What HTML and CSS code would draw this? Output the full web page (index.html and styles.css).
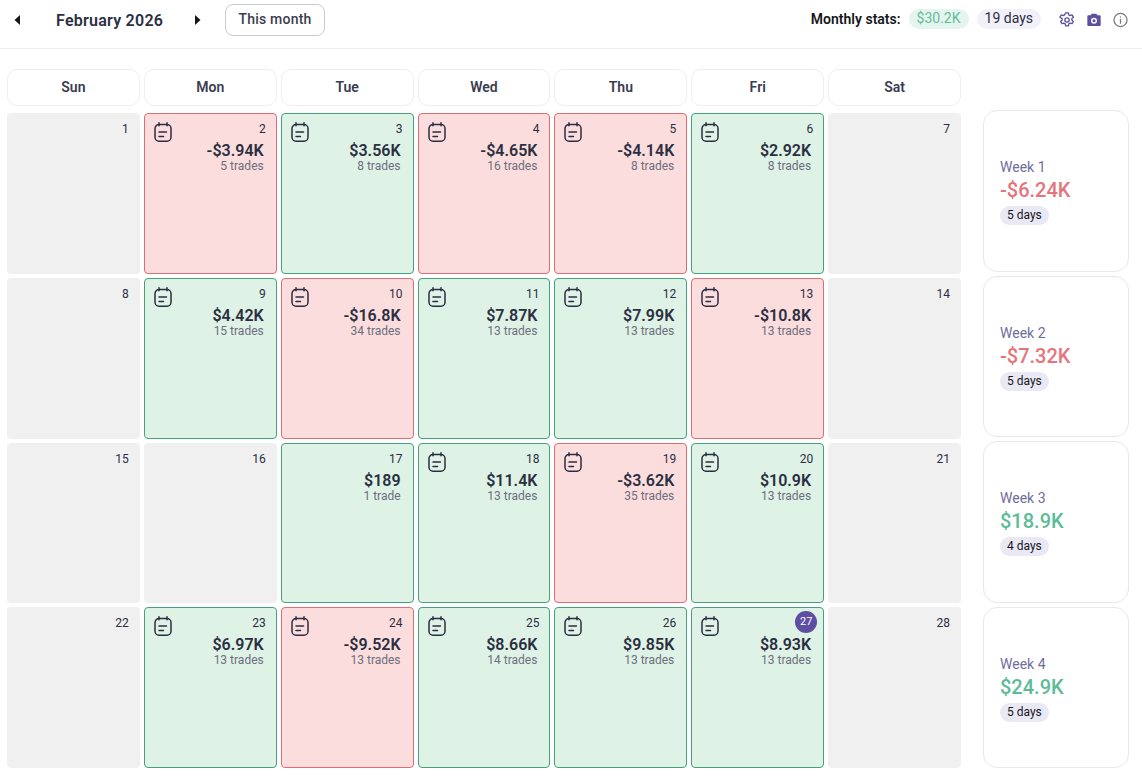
FILE: index.html
```html
<!DOCTYPE html>
<html lang="en">
<head>
<meta charset="utf-8">
<title>February 2026</title>
<link rel="stylesheet" href="styles.css">
</head>
<body>
<svg class="defs" width="0" height="0" aria-hidden="true">
  <defs>
    <symbol id="note" viewBox="0 0 18 20">
      <path d="M5 .8v3M13 .8v3M5 2.500h8A4 4 0 0 1 17 6.500v8.700a4 4 0 0 1-4 4H5a4 4 0 0 1-4-4V6.500A4 4 0 0 1 5 2.500ZM5 10h7.500M5 14.500h4.500" fill="none" stroke="currentColor" stroke-width="1.500" stroke-linecap="round"/>
    </symbol>
  </defs>
</svg>
<header class="topbar">
  <div class="nav">
    <button class="arrow"><svg width="7" height="10" viewBox="0 0 7 10"><path d="M6 0v10L0.500 5Z"/></svg></button>
    <h1 class="month">February 2026</h1>
    <button class="arrow"><svg width="7" height="10" viewBox="0 0 7 10"><path d="M1 0v10L6.500 5Z"/></svg></button>
    <button class="today">This month</button>
  </div>
  <div class="stats">
    <span class="stats-label">Monthly stats:</span>
    <span class="pill pill-green">$30.2K</span>
    <span class="pill pill-lilac">19 days</span>
    <div class="tools">
      <svg width="16" height="16" viewBox="0 0 24 24" fill="none" stroke="#5e4fa2" stroke-width="2" stroke-linejoin="round"><path d="M10 1.200h4l.7 3.100 1.900 1.100 3-1 2 3.400-2.300 2.100v2.200l2.300 2.100-2 3.400-3-1-1.900 1.100-.7 3.100h-4l-.7-3.100-1.900-1.100-3 1-2-3.400 2.300-2.100v-2.200L1.400 7.800l2-3.400 3 1 1.900-1.100Z"/><circle cx="12" cy="12" r="3.200"/></svg>
      <svg width="16" height="16" viewBox="0 0 24 24"><path fill="#5e4fa2" fill-rule="evenodd" d="M8.500 2.500h7L17 5h3.500A1.500 1.500 0 0 1 22 6.500v13a1.500 1.500 0 0 1-1.500 1.500h-17A1.500 1.500 0 0 1 2 19.500v-13A1.500 1.500 0 0 1 3.500 5H7ZM12 8.500a4.500 4.500 0 1 0 0 9 4.500 4.500 0 0 0 0-9Zm0 2.200a2.300 2.300 0 1 1 0 4.600 2.300 2.300 0 0 1 0-4.600Z"/></svg>
      <svg width="15" height="16" viewBox="0 0 24 24" fill="none" stroke="#77777f" stroke-width="2" stroke-linecap="round"><circle cx="12" cy="12" r="10.500"/><path d="M12 11v6M12 7v.2"/></svg>
    </div>
  </div>
</header>
<main class="board">
  <section class="calendar">
    <div class="dow">Sun</div><div class="dow">Mon</div><div class="dow">Tue</div><div class="dow">Wed</div><div class="dow">Thu</div><div class="dow">Fri</div><div class="dow">Sat</div>

    <div class="day empty"><span class="num">1</span></div>
    <div class="day loss"><svg class="note"><use href="#note"/></svg><span class="num">2</span><b class="pnl">-$3.94K</b><span class="trades">5 trades</span></div>
    <div class="day win"><svg class="note"><use href="#note"/></svg><span class="num">3</span><b class="pnl">$3.56K</b><span class="trades">8 trades</span></div>
    <div class="day loss"><svg class="note"><use href="#note"/></svg><span class="num">4</span><b class="pnl">-$4.65K</b><span class="trades">16 trades</span></div>
    <div class="day loss"><svg class="note"><use href="#note"/></svg><span class="num">5</span><b class="pnl">-$4.14K</b><span class="trades">8 trades</span></div>
    <div class="day win"><svg class="note"><use href="#note"/></svg><span class="num">6</span><b class="pnl">$2.92K</b><span class="trades">8 trades</span></div>
    <div class="day empty"><span class="num">7</span></div>

    <div class="day empty"><span class="num">8</span></div>
    <div class="day win"><svg class="note"><use href="#note"/></svg><span class="num">9</span><b class="pnl">$4.42K</b><span class="trades">15 trades</span></div>
    <div class="day loss"><svg class="note"><use href="#note"/></svg><span class="num">10</span><b class="pnl">-$16.8K</b><span class="trades">34 trades</span></div>
    <div class="day win"><svg class="note"><use href="#note"/></svg><span class="num">11</span><b class="pnl">$7.87K</b><span class="trades">13 trades</span></div>
    <div class="day win"><svg class="note"><use href="#note"/></svg><span class="num">12</span><b class="pnl">$7.99K</b><span class="trades">13 trades</span></div>
    <div class="day loss"><svg class="note"><use href="#note"/></svg><span class="num">13</span><b class="pnl">-$10.8K</b><span class="trades">13 trades</span></div>
    <div class="day empty"><span class="num">14</span></div>

    <div class="day empty"><span class="num">15</span></div>
    <div class="day empty"><span class="num">16</span></div>
    <div class="day win"><span class="num">17</span><b class="pnl">$189</b><span class="trades">1 trade</span></div>
    <div class="day win"><svg class="note"><use href="#note"/></svg><span class="num">18</span><b class="pnl">$11.4K</b><span class="trades">13 trades</span></div>
    <div class="day loss"><svg class="note"><use href="#note"/></svg><span class="num">19</span><b class="pnl">-$3.62K</b><span class="trades">35 trades</span></div>
    <div class="day win"><svg class="note"><use href="#note"/></svg><span class="num">20</span><b class="pnl">$10.9K</b><span class="trades">13 trades</span></div>
    <div class="day empty"><span class="num">21</span></div>

    <div class="day empty"><span class="num">22</span></div>
    <div class="day win"><svg class="note"><use href="#note"/></svg><span class="num">23</span><b class="pnl">$6.97K</b><span class="trades">13 trades</span></div>
    <div class="day loss"><svg class="note"><use href="#note"/></svg><span class="num">24</span><b class="pnl">-$9.52K</b><span class="trades">13 trades</span></div>
    <div class="day win"><svg class="note"><use href="#note"/></svg><span class="num">25</span><b class="pnl">$8.66K</b><span class="trades">14 trades</span></div>
    <div class="day win"><svg class="note"><use href="#note"/></svg><span class="num">26</span><b class="pnl">$9.85K</b><span class="trades">13 trades</span></div>
    <div class="day win"><svg class="note"><use href="#note"/></svg><span class="num today-num">27</span><b class="pnl">$8.93K</b><span class="trades">13 trades</span></div>
    <div class="day empty"><span class="num">28</span></div>
  </section>
  <aside class="weeks">
    <div class="week"><span class="week-name">Week 1</span><b class="week-pnl neg">-$6.24K</b><span class="week-days">5 days</span></div>
    <div class="week"><span class="week-name">Week 2</span><b class="week-pnl neg">-$7.32K</b><span class="week-days">5 days</span></div>
    <div class="week"><span class="week-name">Week 3</span><b class="week-pnl pos">$18.9K</b><span class="week-days">4 days</span></div>
    <div class="week"><span class="week-name">Week 4</span><b class="week-pnl pos">$24.9K</b><span class="week-days">5 days</span></div>
  </aside>
</main>
</body>
</html>
```
FILE: styles.css
```css
* { box-sizing: border-box; }
html, body { margin: 0; height: 100%; }
body {
  background: #fff;
  font-family: Roboto, "Liberation Sans", sans-serif;
  color: #2b2d42;
  overflow: hidden;
}
.defs { position: absolute; }
.topbar {
  height: 49px;
  border-bottom: 1px solid #eeeeee;
  display: flex;
  align-items: center;
  justify-content: space-between;
  padding: 0 14px 8px 14px;
}
.nav { display: flex; align-items: center; }
.arrow {
  border: 0;
  background: none;
  padding: 0;
  width: 7px;
  height: 10px;
  display: flex;
  margin-top: 0;
}
.arrow svg { fill: #16161d; }
.month {
  margin: 1px 0 0 35px;
  width: 138px;
  font-size: 16px;
  font-weight: 600;
  letter-spacing: .25px;
  color: #2b2f42;
  line-height: 20px;
}
.today {
  margin: 0 0 0 24px;
  width: 100px;
  height: 32px;
  border: 1px solid #c9c9d2;
  border-radius: 8px;
  background: #fff;
  font: 500 14px Roboto, sans-serif;
  letter-spacing: .2px;
  color: #3b3d50;
  padding: 0 0 3px;
}
.stats { display: flex; align-items: center; margin-top: -3px; }
.stats-label { font-size: 14px; font-weight: 600; color: #16161d; margin-left: 1px; }
.pill {
  font-size: 14px;
  height: 20px;
  line-height: 19px;
  border-radius: 10px;
  padding: 0 8px;
}
.pill-green { margin-left: 8px; background: #e3f5ee; color: #63bd9a; }
.pill-lilac { margin-left: 8px; background: #f2f1fa; color: #2b2d42; }
.tools { display: flex; gap: 11px; margin-left: 18px; margin-top: 3px; }
.tools svg { display: block; }
.board {
  display: flex;
  align-items: flex-end;
  padding: 20px 0 0 7px;
}
.calendar {
  width: 954px;
  display: grid;
  grid-template-columns: repeat(7, 1fr);
  grid-template-rows: 40px repeat(4, 160.75px);
  gap: 4px;
}
.dow {
  border: 1.500px solid #eeeeee;
  border-radius: 10px;
  display: flex;
  align-items: center;
  justify-content: center;
  font-size: 14px;
  font-weight: 600;
  color: #3a3c50;
  margin-bottom: 3px;
  padding-bottom: 1px;
}
.day {
  position: relative;
  border-radius: 4px;
  display: flex;
  flex-direction: column;
  align-items: flex-end;
  padding: 8px 12px 0 0;
  border: 1px solid transparent;
}
.empty { background: #f0f0f0; }
.win { background: #dff2e6; border-color: #45a17c; }
.loss { background: #fcdddd; border-color: #de6d74; }
.note {
  position: absolute;
  left: 9px;
  top: 8px;
  width: 18px;
  height: 20px;
  color: #2b2d42;
}
.num { font-size: 12px; line-height: 14px; color: #2b2d42; margin-right: -2px; }
.today-num {
  width: 22px;
  height: 22px;
  margin: -5px -6px -3px 0;
  border-radius: 50%;
  background: #5e4fa2;
  color: #fff;
  font-size: 11px;
  line-height: 22px;
  text-align: center;
}
.pnl { font-size: 16px; font-weight: 600; line-height: 19px; margin-top: 5px; color: #2b2f42; }
.trades { font-size: 12px; line-height: 13px; color: #6c6e7e; margin-top: 0; }
.weeks {
  width: 146px;
  margin-left: 22px;
  display: flex;
  flex-direction: column;
  gap: 4px;
}
.week {
  height: 161.500px;
  border: 1px solid #e8e8e8;
  border-radius: 14px;
  display: flex;
  flex-direction: column;
  align-items: flex-start;
  justify-content: center;
  padding: 2px 0 0 16px;
}
.week-name { font-size: 14px; line-height: 18px; color: #6f6d9c; }
.week-pnl { font-size: 20px; font-weight: 500; line-height: 26px; margin-top: 1px; }
.neg { color: #e5757c; }
.pos { color: #5cbc97; }
.week-days {
  margin-top: 3px;
  font-size: 12px;
  line-height: 19px;
  height: 19px;
  padding: 0 7px;
  border-radius: 10px;
  background: #e9e8f5;
  color: #16161d;
}
```
